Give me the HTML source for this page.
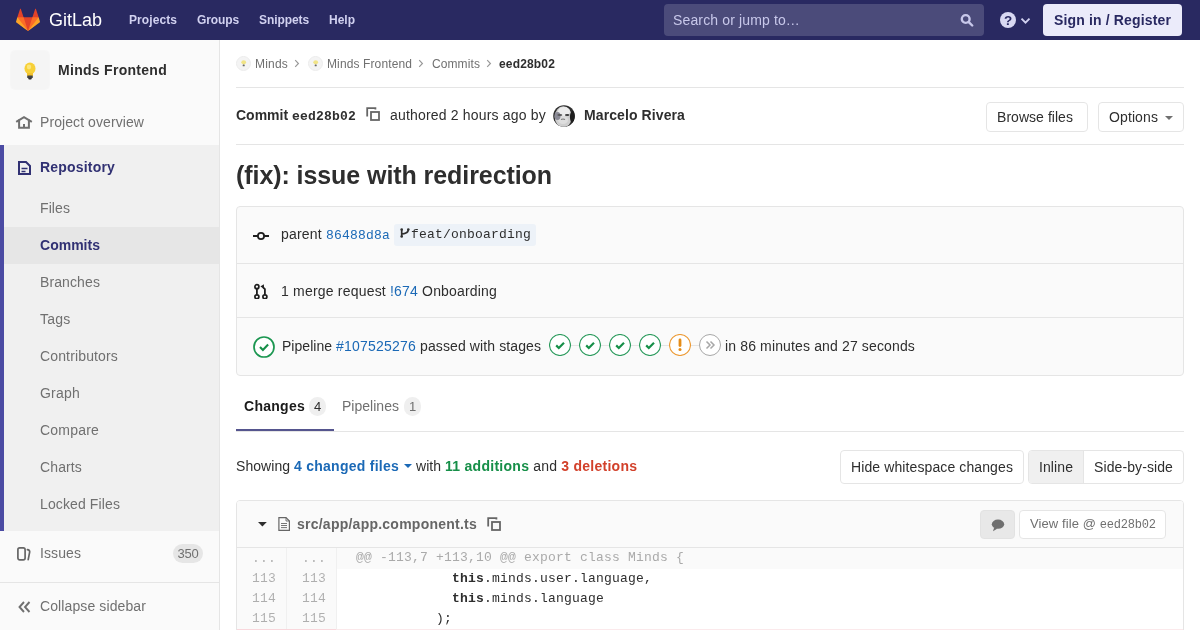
<!DOCTYPE html>
<html><head><meta charset="utf-8">
<style>
*{box-sizing:border-box;margin:0;padding:0}
html,body{width:1200px;height:630px;overflow:hidden;background:#fff}
.a{will-change:transform}
body{font-family:"Liberation Sans",sans-serif;font-size:14px;color:#2e2e2e;position:relative}
.a{position:absolute;white-space:nowrap}
.mono{font-family:"Liberation Mono",monospace}
/* header */
#hdr{position:absolute;left:0;top:0;width:1200px;height:40px;background:#292961}
.nav{position:absolute;top:11.5px;font-size:12px;line-height:16px;font-weight:bold;color:#d1d1f0}
/* sidebar */
#sb{position:absolute;left:0;top:40px;width:220px;height:590px;background:#fafafa;border-right:1px solid #e5e5e5}
.sbt{position:absolute;left:40px;line-height:20px;color:#707070}
.sub{position:absolute;left:40px;line-height:20px;color:#707070}
/* main */
.btn{position:absolute;border:1px solid #e5e5e5;border-radius:4px;background:#fff;color:#2e2e2e;line-height:20px}
.link{color:#1b69b6}
.diffnum{font-size:13px;line-height:20px;color:rgba(0,0,0,0.3)}
</style></head><body>

<div id="hdr">
  <svg class="a" style="left:16px;top:8px" width="24" height="24" viewBox="0 0 36 36">
    <path fill="#e24329" d="M2 14l9.38 9v-9l-4-12.28c-.205-.632-1.176-.632-1.38 0z"></path>
    <path fill="#e24329" d="M34 14l-9.38 9v-9l4-12.28c.205-.632 1.176-.632 1.38 0z"></path>
    <path fill="#e24329" d="M18,34.38 3,14 33,14 Z"></path>
    <path fill="#fc6d26" d="M18,34.38 11.38,14 2,14 6,25Z"></path>
    <path fill="#fc6d26" d="M18,34.38 24.62,14 34,14 30,25Z"></path>
    <path fill="#fca326" d="M2 14L.1 20.16c-.18.565 0 1.2.5 1.56l17.42 12.66z"></path>
    <path fill="#fca326" d="M34 14l1.9 6.16c.18.565 0 1.2-.5 1.56L18 34.38z"></path>
  </svg>
  <div class="a" style="left:49px;top:7.5px;font-size:18px;line-height:24px;color:#fff"><span style="letter-spacing: -0.006px;">GitLab</span></div>
  <div class="nav a" style="left:129px"><span style="letter-spacing: 0.081px;">Projects</span></div>
  <div class="nav a" style="left:197px"><span style="letter-spacing: -0.111px;">Groups</span></div>
  <div class="nav a" style="left:259px"><span style="letter-spacing: -0.084px;">Snippets</span></div>
  <div class="nav a" style="left:329px">Help</div>
  <div class="a" style="left:664px;top:4px;width:320px;height:32px;border-radius:4px;background:rgba(255,255,255,0.16)"></div>
  <div class="a" style="left:673px;top:10px;line-height:20px;color:#c8c8ea"><span style="letter-spacing: 0.139px;">Search or jump to…</span></div>
  <svg class="a" style="left:960px;top:13px" width="14" height="14" viewBox="0 0 14 14"><circle cx="5.7" cy="6" r="3.9" fill="none" stroke="#c8c8ea" stroke-width="2.4"></circle><path d="M8.8 9.1l3.4 3.4" stroke="#c8c8ea" stroke-width="2.4" stroke-linecap="round"></path></svg>
  <svg class="a" style="left:1000px;top:12px" width="16" height="16" viewBox="0 0 16 16"><circle cx="8" cy="8" r="8" fill="#d8d8f2"></circle><text x="8" y="12.7" text-anchor="middle" font-family="Liberation Sans" font-weight="bold" font-size="13.5" fill="#292961">?</text></svg>
  <svg class="a" style="left:1020px;top:17px" width="11" height="8" viewBox="0 0 11 8"><path d="M1.5 1.6l4 4 4-4" fill="none" stroke="#d1d1f0" stroke-width="1.9"></path></svg>
  <div class="a" style="left:1043px;top:4px;width:139px;height:32px;border-radius:4px;background:#ebebfa"></div>
  <div class="a" style="left:1054px;top:9.9px;line-height:20px;font-weight:bold;color:#292961"><span style="letter-spacing: 0.147px;">Sign in / Register</span></div>
</div>

<div id="sb">
  <div class="a" style="left:11px;top:11px;width:38px;height:38px;border-radius:4px;background:#f5f5f5;box-shadow:0 0 0 1px rgba(0,0,0,0.015)"></div>
  <svg class="a" style="left:23px;top:22px" width="14" height="18" viewBox="0 0 14 18">
    <ellipse cx="7" cy="6.5" rx="5.5" ry="6" fill="#f7d038"></ellipse>
    <ellipse cx="6" cy="5" rx="2.2" ry="2.4" fill="#fbe67a"></ellipse>
    <rect x="4" y="11" width="6" height="3" fill="#f2c230"></rect>
    <rect x="4.2" y="13.5" width="5.6" height="2.5" rx="0.6" fill="#444"></rect>
    <rect x="5.2" y="15.8" width="3.6" height="1.6" rx="0.8" fill="#333"></rect>
  </svg>
  <div class="a" style="left:58px;top:20px;line-height:20px;font-weight:bold;color:#2e2e2e"><span style="letter-spacing: 0.287px;">Minds Frontend</span></div>
  <svg class="a" style="left:12px;top:70px" width="24" height="24" viewBox="0 0 24 24"><path d="M4.2 11.8L12 7.1l7.8 4.7" fill="none" stroke="#707070" stroke-width="2" stroke-linejoin="miter"></path><path d="M7.1 9.6v8.1h9.8V9.6" fill="none" stroke="#707070" stroke-width="2"></path><rect x="11" y="14" width="2" height="4" fill="#707070"></rect></svg>
  <div class="sbt a" style="top:72px"><span style="letter-spacing: 0.081px;">Project overview</span></div>
  <div class="a" style="left:0;top:105px;width:219px;height:386px;background:#f0f0f0"></div>
  <div class="a" style="left:0;top:105px;width:4px;height:386px;background:#4b4ba3"></div>
  <svg class="a" style="left:18px;top:121px" width="13" height="14" viewBox="0 0 13 14"><path d="M1 1h7l4 4v8H1z" fill="none" stroke="#313173" stroke-width="2" stroke-linejoin="miter"></path><path d="M3.5 7.5h6M3.5 10.5h4" stroke="#313173" stroke-width="1.6"></path></svg>
  <div class="a" style="left:40px;top:117px;line-height:20px;font-weight:bold;color:#313173"><span style="letter-spacing: 0.188px;">Repository</span></div>
  <div class="a" style="left:4px;top:187px;width:215px;height:37px;background:#e6e6e6"></div>
  <div class="sub a" style="top:158px"><span style="letter-spacing: 0.088px;">Files</span></div>
  <div class="sub a" style="top:195px;font-weight:bold;color:#313173"><span style="letter-spacing: 0.015px;">Commits</span></div>
  <div class="sub a" style="top:232px"><span style="letter-spacing: 0.107px;">Branches</span></div>
  <div class="sub a" style="top:269px"><span style="letter-spacing: 0.219px;">Tags</span></div>
  <div class="sub a" style="top:306px"><span style="letter-spacing: 0.145px;">Contributors</span></div>
  <div class="sub a" style="top:343px"><span style="letter-spacing: 0.218px;">Graph</span></div>
  <div class="sub a" style="top:380px"><span style="letter-spacing: 0.203px;">Compare</span></div>
  <div class="sub a" style="top:417px"><span style="letter-spacing: 0.128px;">Charts</span></div>
  <div class="sub a" style="top:454px"><span style="letter-spacing: 0.117px;">Locked Files</span></div>
  <svg class="a" style="left:16px;top:507px" width="15" height="15" viewBox="0 0 15 15"><rect x="1.9" y="0.9" width="7.2" height="12" rx="1.8" fill="none" stroke="#666" stroke-width="1.7"></rect><path d="M11.4 2.6q2.4 0.3 2.3 2.2L12.2 12.6" fill="none" stroke="#666" stroke-width="1.7" stroke-linecap="round"></path></svg>
  <div class="sbt a" style="top:503px"><span style="letter-spacing: 0.09px;">Issues</span></div>
  <div class="a" style="left:173px;top:504px;width:30px;height:19px;border-radius:10px;background:#e6e6e6;color:#707070;font-size:13px;line-height:19px;text-align:center"><span style="letter-spacing: -0.23px;">350</span></div>
  <div class="a" style="left:0;top:542px;width:219px;height:1px;background:#e5e5e5"></div>
  <svg class="a" style="left:18px;top:561px" width="13" height="12" viewBox="0 0 13 12"><path d="M6 1L1.5 6 6 11M11.5 1L7 6l4.5 5" fill="none" stroke="#707070" stroke-width="1.9"></path></svg>
  <div class="sbt a" style="top:556px"><span style="letter-spacing: 0.107px;">Collapse sidebar</span></div>
</div>


<div id="main">
  <!-- breadcrumbs -->
  <div class="a" style="left:236px;top:56px;width:15px;height:15px;border-radius:50%;background:#f4f4f4;border:1px solid #ececec"></div>
  <svg class="a" style="left:240px;top:59px" width="7" height="9" viewBox="0 0 7 9"><ellipse cx="3.7" cy="3.3" rx="2.4" ry="2.1" fill="#f1e487"></ellipse><rect x="2.7" y="5.6" width="2" height="1.7" rx="0.5" fill="#6a6a6a"></rect></svg>
  <div class="a" style="left:255px;top:56px;font-size:12px;line-height:16px;color:#707070"><span style="letter-spacing: 0.198px;">Minds</span></div>
  <svg class="a" style="left:294px;top:59px" width="6" height="9" viewBox="0 0 6 9"><path d="M1.2 1.2l3.2 3.3-3.2 3.3" fill="none" stroke="#999" stroke-width="1.2"></path></svg>
  <div class="a" style="left:308px;top:56px;width:15px;height:15px;border-radius:50%;background:#f4f4f4;border:1px solid #ececec"></div>
  <svg class="a" style="left:312px;top:59px" width="7" height="9" viewBox="0 0 7 9"><ellipse cx="3.7" cy="3.3" rx="2.4" ry="2.1" fill="#f1e487"></ellipse><rect x="2.7" y="5.6" width="2" height="1.7" rx="0.5" fill="#6a6a6a"></rect></svg>
  <div class="a" style="left:327px;top:56px;font-size:12px;line-height:16px;color:#707070"><span style="letter-spacing: 0.116px;">Minds Frontend</span></div>
  <svg class="a" style="left:418px;top:59px" width="6" height="9" viewBox="0 0 6 9"><path d="M1.2 1.2l3.2 3.3-3.2 3.3" fill="none" stroke="#999" stroke-width="1.2"></path></svg>
  <div class="a" style="left:432px;top:56px;font-size:12px;line-height:16px;color:#707070"><span style="letter-spacing: 0.095px;">Commits</span></div>
  <svg class="a" style="left:486px;top:59px" width="6" height="9" viewBox="0 0 6 9"><path d="M1.2 1.2l3.2 3.3-3.2 3.3" fill="none" stroke="#999" stroke-width="1.2"></path></svg>
  <div class="a" style="left:499px;top:56px;font-size:12px;line-height:16px;font-weight:bold;color:#2e2e2e"><span style="letter-spacing: 0.162px;">eed28b02</span></div>
  <div class="a" style="left:236px;top:87px;width:948px;height:1px;background:#e5e5e5"></div>

  <!-- commit header -->
  <div class="a" style="left:236px;top:105px;line-height:20px;font-weight:bold">Commit <span class="mono" style="font-size:13px"><span style="letter-spacing: 0.199px;">eed28b02</span></span></div>
  <svg class="a" style="left:366px;top:107px" width="14" height="14" viewBox="0 0 14 14"><path d="M1.2 9.6V1.2h8.2v1.4" fill="none" stroke="#666" stroke-width="1.8"></path><rect x="5" y="5" width="8" height="8" fill="none" stroke="#666" stroke-width="1.8"></rect></svg>
  <div class="a" style="left:390px;top:105px;line-height:20px;color:#2e2e2e"><span style="letter-spacing: 0.184px;">authored 2 hours ago by</span></div>
  <svg class="a" style="left:553px;top:105px" width="22" height="22" viewBox="0 0 22 22"><defs><clipPath id="av"><circle cx="11" cy="11" r="10.8"></circle></clipPath></defs><g clip-path="url(#av)"><rect width="22" height="22" fill="#2e2e2e"></rect><ellipse cx="10.3" cy="11.8" rx="8.6" ry="10.5" fill="#cfcfcf"></ellipse><ellipse cx="11" cy="6.5" rx="6" ry="4.5" fill="#ececec"></ellipse><ellipse cx="10" cy="15" rx="5" ry="4" fill="#dedede"></ellipse><ellipse cx="4.5" cy="11" rx="3" ry="4" fill="#8a8a96"></ellipse><ellipse cx="6.8" cy="10" rx="2.5" ry="1.1" fill="#555"></ellipse><ellipse cx="14.2" cy="10" rx="2.3" ry="1.1" fill="#3a3a3a"></ellipse><path d="M8 14.5q2-1 4 0" stroke="#777" stroke-width="1.2" fill="none"></path><ellipse cx="19.5" cy="12" rx="2.6" ry="6" fill="#1e1e1e"></ellipse></g></svg>
  <div class="a" style="left:584px;top:105px;line-height:20px;font-weight:bold"><span style="letter-spacing: 0.1px;">Marcelo Rivera</span></div>
  <div class="btn a" style="left:986px;top:102px;width:102px;height:30px;padding:4px 0 0 10px"><span style="letter-spacing: 0.044px;">Browse files</span></div>
  <div class="btn a" style="left:1098px;top:102px;width:86px;height:30px;padding:4px 0 0 10px"><span style="letter-spacing: 0.107px;">Options</span></div>
  <svg class="a" style="left:1165px;top:116px" width="8" height="4" viewBox="0 0 8 4"><path d="M0 0h8L4 4z" fill="#707070"></path></svg>
  <div class="a" style="left:236px;top:144px;width:948px;height:1px;background:#e5e5e5"></div>

  <!-- title -->
  <div class="a" style="left:236px;top:160px;font-size:25px;line-height:30px;font-weight:bold;color:#2e2e2e"><span style="letter-spacing: -0.073px;">(fix): issue with redirection</span></div>

  <!-- info box -->
  <div class="a" style="left:236px;top:206px;width:948px;height:170px;border:1px solid #e5e5e5;border-radius:4px;background:#fafafa"></div>
  <div class="a" style="left:237px;top:263px;width:946px;height:1px;background:#e5e5e5"></div>
  <div class="a" style="left:237px;top:317px;width:946px;height:1px;background:#e5e5e5"></div>
  <svg class="a" style="left:252px;top:228px" width="18" height="16" viewBox="0 0 18 16"><circle cx="9" cy="8" r="3.1" fill="none" stroke="#1f1f1f" stroke-width="1.8"></circle><path d="M1 8h5M12 8h5" stroke="#1f1f1f" stroke-width="1.9"></path></svg>
  <div class="a" style="left:281px;top:223.5px;line-height:20px"><span style="letter-spacing: 0.202px;">parent </span><span class="mono link" style="font-size:13px"><span style="letter-spacing: 0.199px;">86488d8a</span></span></div>
  <div class="a" style="left:394px;top:223.5px;width:142px;height:21.5px;border-radius:3px;background:#edf2f8"></div>
  <svg class="a" style="left:400px;top:228px" width="10" height="10" viewBox="0 0 10 10"><circle cx="1.7" cy="1.5" r="1.3" fill="#2e2e2e"></circle><circle cx="8.3" cy="1.5" r="1.3" fill="#2e2e2e"></circle><circle cx="1.7" cy="8.5" r="1.3" fill="#2e2e2e"></circle><path d="M1.7 1.5v7M8.3 1.5q0 3.8-6.6 4.6" fill="none" stroke="#2e2e2e" stroke-width="1.7"></path></svg>
  <div class="a mono" style="left:411px;top:224.5px;line-height:20px;font-size:13px"><span style="letter-spacing: 0.199px;">feat/onboarding</span></div>
  <svg class="a" style="left:253px;top:283px" width="15" height="16" viewBox="0 0 15 16"><circle cx="3.9" cy="3.7" r="2" fill="none" stroke="#1f1f1f" stroke-width="1.7"></circle><circle cx="3.9" cy="13.8" r="2" fill="none" stroke="#1f1f1f" stroke-width="1.7"></circle><circle cx="11.9" cy="13.8" r="2" fill="none" stroke="#1f1f1f" stroke-width="1.7"></circle><path d="M3.9 5.7v6.1M11.9 11.8V6.2L9.8 4.1" fill="none" stroke="#1f1f1f" stroke-width="1.8"></path><path d="M7.4 3.4l3.4-2.2.3 4.5z" fill="#1f1f1f"></path></svg>
  <div class="a" style="left:281px;top:280.5px;line-height:20px"><span style="letter-spacing: 0.198px;">1 merge request </span><span class="link"><span style="letter-spacing: 0.188px;">!674</span></span><span style="letter-spacing: 0.177px;"> Onboarding</span></div>
  <svg class="a" style="left:253px;top:336px" width="22" height="22" viewBox="0 0 22 22"><circle cx="11" cy="11" r="10" fill="#fff" stroke="#1b9650" stroke-width="1.7"></circle><path d="M7 11.1l2.9 2.9 5.2-5.4" fill="none" stroke="#168f48" stroke-width="2.1"></path></svg>
  <div class="a" style="left:282px;top:336px;line-height:20px"><span style="letter-spacing: 0.033px;">Pipeline </span><span class="link"><span style="letter-spacing: 0.214px;">#107525276</span></span><span style="letter-spacing: 0.107px;"> passed with stages</span></div>
  <div class="a" style="left:560px;top:345px;width:150px;height:1px;background:#e5e5e5"></div>
  <svg class="a" style="left:549px;top:334px" width="22" height="22" viewBox="0 0 22 22"><circle cx="11" cy="11" r="10.5" fill="#fff" stroke="#2a9a5c" stroke-width="1.1"></circle><path d="M7.2 11.4l2.6 2.6 5.2-5.2" fill="none" stroke="#168f48" stroke-width="2.2"></path></svg>
<svg class="a" style="left:579px;top:334px" width="22" height="22" viewBox="0 0 22 22"><circle cx="11" cy="11" r="10.5" fill="#fff" stroke="#2a9a5c" stroke-width="1.1"></circle><path d="M7.2 11.4l2.6 2.6 5.2-5.2" fill="none" stroke="#168f48" stroke-width="2.2"></path></svg>
<svg class="a" style="left:609px;top:334px" width="22" height="22" viewBox="0 0 22 22"><circle cx="11" cy="11" r="10.5" fill="#fff" stroke="#2a9a5c" stroke-width="1.1"></circle><path d="M7.2 11.4l2.6 2.6 5.2-5.2" fill="none" stroke="#168f48" stroke-width="2.2"></path></svg>
<svg class="a" style="left:639px;top:334px" width="22" height="22" viewBox="0 0 22 22"><circle cx="11" cy="11" r="10.5" fill="#fff" stroke="#2a9a5c" stroke-width="1.1"></circle><path d="M7.2 11.4l2.6 2.6 5.2-5.2" fill="none" stroke="#168f48" stroke-width="2.2"></path></svg>
<svg class="a" style="left:669px;top:334px" width="22" height="22" viewBox="0 0 22 22"><circle cx="11" cy="11" r="10.5" fill="#fff" stroke="#ec9a35" stroke-width="1.1"></circle><path d="M11 6v5.6" stroke="#e58c17" stroke-width="2.8" stroke-linecap="round"></path><circle cx="11" cy="15.6" r="1.5" fill="#e58c17"></circle></svg>
<svg class="a" style="left:699px;top:334px" width="22" height="22" viewBox="0 0 22 22"><circle cx="11" cy="11" r="10.5" fill="#fff" stroke="#a7a7a7" stroke-width="1"></circle><path d="M7.5 7.5l3.5 3.5-3.5 3.5M11.5 7.5l3.5 3.5-3.5 3.5" fill="none" stroke="#a7a7a7" stroke-width="1.5"></path></svg>

  <div class="a" style="left:725px;top:336px;line-height:20px"><span style="letter-spacing: 0.142px;">in 86 minutes and 27 seconds</span></div>

  <!-- tabs -->
  <div class="a" style="left:244px;top:396px;line-height:20px;font-weight:bold;color:#1a1a1a"><span style="letter-spacing: 0.268px;">Changes</span></div>
  <div class="a" style="left:309px;top:397px;width:17px;height:19px;border-radius:9px;background:#efefef;font-size:13px;line-height:19px;text-align:center;color:#2e2e2e"><span style="letter-spacing: -0.23px;">4</span></div>
  <div class="a" style="left:342px;top:396px;line-height:20px;color:#707070"><span style="letter-spacing: 0.021px;">Pipelines</span></div>
  <div class="a" style="left:404px;top:397px;width:17px;height:19px;border-radius:9px;background:#efefef;font-size:13px;line-height:19px;text-align:center;color:#707070"><span style="letter-spacing: -0.23px;">1</span></div>
  <div class="a" style="left:236px;top:431px;width:948px;height:1px;background:#e5e5e5"></div>
  <div class="a" style="left:236px;top:429px;width:98px;height:2px;background:#55558e"></div>

  <!-- stats -->
  <div class="a" style="left:236px;top:456px;line-height:20px"><span style="letter-spacing: 0.051px;">Showing </span><b class="link"><span style="letter-spacing: 0.257px;">4 changed files</span></b></div>
  <svg class="a" style="left:403.5px;top:464px" width="8" height="4" viewBox="0 0 8 4"><path d="M0 0h8L4 4z" fill="#1b69b6"></path></svg>
  <div class="a" style="left:416px;top:456px;line-height:20px"><span style="letter-spacing: 0.043px;">with </span><b style="color:#168f48"><span style="letter-spacing: 0.276px;">11 additions</span></b><span style="letter-spacing: 0.172px;"> and </span><b style="color:#d2402a"><span style="letter-spacing: 0.261px;">3 deletions</span></b></div>
  <div class="btn a" style="left:840px;top:450px;width:184px;height:34px;padding:6px 0 0 10px"><span style="letter-spacing: 0.107px;">Hide whitespace changes</span></div>
  <div class="btn a" style="left:1028px;top:450px;width:156px;height:34px"></div>
  <div class="a" style="left:1029px;top:451px;width:55px;height:32px;background:#f0f0f0;border-right:1px solid #e5e5e5;border-radius:3px 0 0 3px"></div>
  <div class="a" style="left:1039px;top:457px;line-height:20px"><span style="letter-spacing: 0.089px;">Inline</span></div>
  <div class="a" style="left:1094px;top:457px;line-height:20px"><span style="letter-spacing: 0.099px;">Side-by-side</span></div>

  <!-- file -->
  <div class="a" style="left:236px;top:500px;width:948px;height:140px;border:1px solid #e5e5e5;border-radius:4px 4px 0 0;background:#fff"></div>
  <div class="a" style="left:237px;top:501px;width:946px;height:47px;background:#fafafa;border-bottom:1px solid #e5e5e5;border-radius:3px 3px 0 0"></div>
  <svg class="a" style="left:257.5px;top:521.5px" width="9" height="5" viewBox="0 0 9 5"><path d="M0 0h8.8L4.4 4.6z" fill="#2e2e2e"></path></svg>
  <svg class="a" style="left:277px;top:516px" width="14" height="16" viewBox="0 0 14 16"><path d="M1.9 1.6H9L12.4 5V14.4H1.9z" fill="none" stroke="#666" stroke-width="1.2" stroke-linejoin="miter"></path><path d="M9 1.6V5h3.4" fill="none" stroke="#666" stroke-width="0.9"></path><path d="M4 7.5h6M4 9.5h6M4 11.6h6" stroke="#666" stroke-width="0.9"></path></svg>
  <div class="a" style="left:297px;top:514px;line-height:20px;font-weight:bold;color:#666"><span style="letter-spacing: 0.24px;">src/app/app.component.ts</span></div>
  <svg class="a" style="left:487px;top:517px" width="14" height="14" viewBox="0 0 14 14"><path d="M1.2 9.6V1.2h8.2v1.4" fill="none" stroke="#666" stroke-width="1.8"></path><rect x="5" y="5" width="8" height="8" fill="none" stroke="#666" stroke-width="1.8"></rect></svg>
  <div class="a" style="left:980px;top:510px;width:35px;height:29px;border-radius:4px;background:#e8e8e8;border:1px solid #e2e2e2"></div>
  <svg class="a" style="left:990.5px;top:519px" width="14" height="13" viewBox="0 0 14 13"><ellipse cx="7" cy="5.2" rx="6.2" ry="4.6" fill="#6f6f6f"></ellipse><path d="M3.2 8.5L2 12.2 6.5 9.5z" fill="#6f6f6f"></path></svg>
  <div class="btn a" style="left:1019px;top:510px;width:147px;height:29px;padding:3px 0 0 10px;color:#707070;font-size:13px"><span style="letter-spacing: 0.098px;">View file @ </span><span class="mono" style="font-size:12px"><span style="letter-spacing: -0.201px;">eed28b02</span></span></div>

  <!-- diff -->
  <div class="a" style="left:237px;top:548px;width:946px;height:21px;background:#fafafa"></div>
  <div class="a" style="left:286px;top:548px;width:1px;height:82px;background:#f0f0f0"></div>
  <div class="a" style="left:336px;top:548px;width:1px;height:82px;background:#f0f0f0"></div>
  <div class="a" style="left:237px;top:548px;width:49px;height:82px;background:#fafafa"></div>
  <div class="a" style="left:287px;top:548px;width:49px;height:82px;background:#fafafa"></div>
  <div class="a" style="left:237px;top:629px;width:946px;height:1px;background:#fbe9eb"></div>
  <div class="a" style="left:237px;top:629px;width:99px;height:1px;background:#f9d7dc"></div>
  <div class="diffnum a mono" style="left:237px;top:549px;width:39px;text-align:right"><span style="letter-spacing: 0.199px;">...</span><br><span style="letter-spacing: 0.199px;">113</span><br><span style="letter-spacing: 0.199px;">114</span><br><span style="letter-spacing: 0.199px;">115</span></div>
  <div class="diffnum a mono" style="left:287px;top:549px;width:39px;text-align:right"><span style="letter-spacing: 0.199px;">...</span><br><span style="letter-spacing: 0.199px;">113</span><br><span style="letter-spacing: 0.199px;">114</span><br><span style="letter-spacing: 0.199px;">115</span></div>
  <div class="a mono" style="left:356px;top:548px;font-size:13px;line-height:20px;color:#aaa;white-space:pre"><span style="letter-spacing: 0.199px;">@@ -113,7 +113,10 @@ export class Minds {</span></div>
  <div class="a mono" style="left:356px;top:569px;font-size:13px;line-height:20px;color:#2e2e2e;white-space:pre"><span style="letter-spacing: 0.199px;">            </span><b><span style="letter-spacing: 0.199px;">this</span></b><span style="letter-spacing: 0.199px;">.minds.user.language,
            </span><b><span style="letter-spacing: 0.199px;">this</span></b><span style="letter-spacing: 0.199px;">.minds.language
          );</span></div>
</div>

</body></html>
